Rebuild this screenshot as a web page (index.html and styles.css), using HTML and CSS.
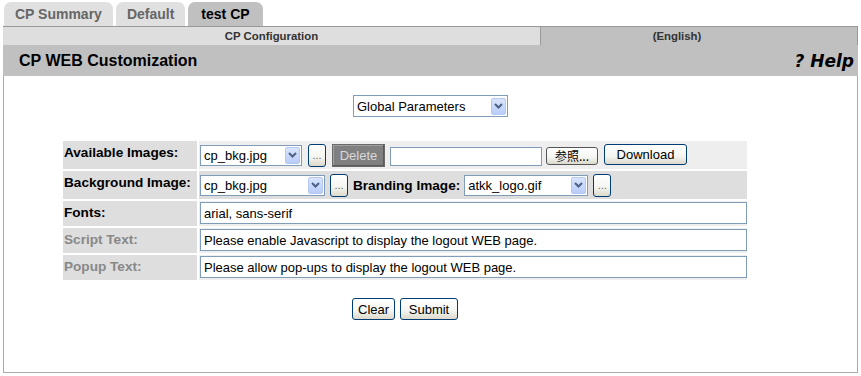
FILE: index.html
```html
<!DOCTYPE html>
<html lang="en">
<head>
<meta charset="utf-8">
<title>CP WEB Customization</title>
<link rel="stylesheet" href="styles.css">
</head>
<body>

<div class="tabs">
  <span class="tab">CP Summary</span>
  <span class="tab">Default</span>
  <span class="tab active">test CP</span>
</div>

<div class="page">
  <div class="subbar">
    <div class="sub-cell sub-config">CP Configuration</div>
    <div class="sub-cell sub-lang">(English)</div>
  </div>

  <div class="header">
    <span class="title">CP WEB Customization</span>
    <span class="help">? Help</span>
  </div>

  <div class="content">
    <div class="scope">
      <span class="combo combo-scope"><span class="combo-text">Global Parameters</span><span class="arrow"><svg width="9" height="6" viewBox="0 0 9 6"><path d="M1 1 L4.5 4.5 L8 1" fill="none" stroke="#4d6185" stroke-width="2"/></svg></span></span>
    </div>

    <table class="params">
      <tr class="row-a">
        <td class="label">Available Images:</td>
        <td class="value">
          <div class="controls">
            <span class="combo combo-img"><span class="combo-text">cp_bkg.jpg</span><span class="arrow"><svg width="9" height="6" viewBox="0 0 9 6"><path d="M1 1 L4.5 4.5 L8 1" fill="none" stroke="#4d6185" stroke-width="2"/></svg></span></span>
            <button class="btn btn-dots">...</button>
            <button class="btn btn-delete">Delete</button>
            <input class="file-path" type="text">
            <button class="btn btn-browse">参照...</button>
            <button class="btn btn-download">Download</button>
          </div>
        </td>
      </tr>
      <tr class="row-b">
        <td class="label">Background Image:</td>
        <td class="value">
          <div class="controls">
            <span class="combo combo-bg"><span class="combo-text">cp_bkg.jpg</span><span class="arrow"><svg width="9" height="6" viewBox="0 0 9 6"><path d="M1 1 L4.5 4.5 L8 1" fill="none" stroke="#4d6185" stroke-width="2"/></svg></span></span>
            <button class="btn btn-dots">...</button>
            <span class="inline-label">Branding Image:</span>
            <span class="combo combo-brand"><span class="combo-text">atkk_logo.gif</span><span class="arrow"><svg width="9" height="6" viewBox="0 0 9 6"><path d="M1 1 L4.5 4.5 L8 1" fill="none" stroke="#4d6185" stroke-width="2"/></svg></span></span>
            <button class="btn btn-dots">...</button>
          </div>
        </td>
      </tr>
      <tr class="row-c">
        <td class="label">Fonts:</td>
        <td class="value"><input class="wide" type="text" value="arial, sans-serif"></td>
      </tr>
      <tr class="row-c">
        <td class="label muted">Script Text:</td>
        <td class="value"><input class="wide" type="text" value="Please enable Javascript to display the logout WEB page."></td>
      </tr>
      <tr class="row-c">
        <td class="label muted">Popup Text:</td>
        <td class="value"><input class="wide" type="text" value="Please allow pop-ups to display the logout WEB page."></td>
      </tr>
    </table>

    <div class="actions">
      <button class="btn btn-clear">Clear</button>
      <button class="btn btn-submit">Submit</button>
    </div>
  </div>
</div>

</body>
</html>
```

FILE: styles.css
```css
body {
  margin: 0;
  font-family: "Liberation Sans", Arial, sans-serif;
  font-size: 13px;
  color: #000;
  background: #fff;
}

.tabs {
  display: flex;
  gap: 3px;
  padding: 2px 0 0 4px;
  height: 24px;
}

.tab {
  background-color: #e0e0e0;
  border-radius: 7px 7px 0 0;
  padding: 0 11px;
  line-height: 25px;
  font-size: 14px;
  font-weight: bold;
  color: #666;
}

.tab.active {
  background-color: #c0c0c0;
  color: #000;
  padding: 0 13px;
}

.page {
  margin: 0 3px 0 3px;
  width: 855px;
}

.subbar {
  display: flex;
  height: 18px;
  border-top: 1px solid #999;
  font-size: 11.4px;
  font-weight: bold;
  line-height: 18px;
  color: #333;
}

.sub-cell {
  text-align: center;
}

.sub-config {
  width: 537px;
  background-color: #dedede;
}

.sub-lang {
  flex: 1;
  background-color: #c0c0c0;
  border-left: 1px solid #999;
  border-right: 1px solid #999;
  padding-right: 44px;
}

.header {
  display: flex;
  justify-content: space-between;
  align-items: center;
  height: 31px;
  background-color: #c0c0c0;
  padding: 0 4px 0 16px;
}

.title {
  font-size: 16px;
  font-weight: bold;
}

.help {
  font-family: "DejaVu Sans", sans-serif;
  font-size: 17px;
  font-weight: bold;
  font-style: italic;
}

.content {
  height: 296px;
  border: 1px solid #aaa;
  border-top: none;
}

.scope {
  display: flex;
  justify-content: center;
  padding-top: 19px;
}

.combo {
  display: inline-flex;
  align-items: center;
  justify-content: space-between;
  box-sizing: border-box;
  height: 21px;
  border: 1px solid #7f9db9;
  background: #fff;
  padding: 0 1px 0 3px;
  font-size: 13px;
}

.combo-scope {
  width: 155px;
  height: 22px;
}

.combo-img {
  width: 102px;
}

.combo-bg {
  width: 125px;
}

.combo-brand {
  width: 124px;
}

.arrow {
  display: flex;
  align-items: center;
  justify-content: center;
  width: 15px;
  height: 17px;
  background: linear-gradient(#d9e5fd, #b9cdf9);
  border: 1px solid #b5c8f0;
  box-sizing: border-box;
  border-radius: 2px;
}

.params {
  margin: 22px 0 0 57px;
  width: 688px;
  border-spacing: 2px;
}

.params td {
  padding: 0;
  vertical-align: top;
}

.label {
  width: 134px;
  background-color: #dedede;
  font-size: 13.6px;
  font-weight: bold;
  padding: 4px 0 0 1px !important;
}

.label.muted {
  color: #888;
}

.row-a,
.row-b {
  height: 28px;
}

.row-a .value {
  background-color: #eeeeee;
}

.row-b td {
  background-color: #dedede;
}

.row-c {
  height: 25px;
}

.row-c .value {
  background-color: #eeeeee;
}

.controls {
  display: flex;
  align-items: center;
  gap: 6px;
  height: 28px;
  padding-left: 1px;
}

.row-b .controls {
  gap: 5px;
}

.inline-label {
  font-size: 13.6px;
  font-weight: bold;
  margin-right: -1px;
}

.btn {
  font-family: "Liberation Sans", Arial, sans-serif;
  font-size: 13px;
  color: #000;
  height: 22px;
  padding: 0 5px;
  border: 1px solid #003c74;
  border-radius: 3px;
  background: linear-gradient(#ffffff, #f4f4f0 60%, #dcd9cb);
}

.btn-dots {
  width: 18px;
  height: 23px;
  padding: 0;
  font-size: 11px;
  color: #666;
  line-height: 14px;
}

.btn-delete {
  width: 53px;
  height: 23px;
  background: #808080;
  border: 1px solid #6a6a6a;
  border-radius: 0;
  color: #d8d8d8;
  box-shadow: inset -1px -1px #5a5a5a, inset 1px 1px #a0a0a0;
}

.file-path {
  box-sizing: border-box;
  width: 152px;
  height: 19px;
  border: 1px solid #7f9db9;
  margin: 2px 0 0 -1px;
}

.btn-browse {
  height: 18px;
  width: 52px;
  margin: 2px 0 0 -2px;
  padding: 0;
  font-family: "Noto Sans CJK JP", "Liberation Sans", sans-serif;
  font-size: 12px;
  line-height: 14px;
  border-color: #555;
}

.btn-download {
  width: 83px;
  height: 21px;
  margin-top: -2px;
}

.wide {
  box-sizing: border-box;
  width: 547px;
  height: 22px;
  margin: 1px 0 0 1px;
  border: 1px solid #7f9db9;
  padding: 0 3px;
  font-family: "Liberation Sans", Arial, sans-serif;
  font-size: 13px;
  color: #000;
}

.actions {
  display: flex;
  justify-content: center;
  gap: 5px;
  width: 688px;
  margin: 16px 0 0 57px;
}

.btn-clear {
  width: 43px;
}

.btn-submit {
  width: 58px;
}
```
